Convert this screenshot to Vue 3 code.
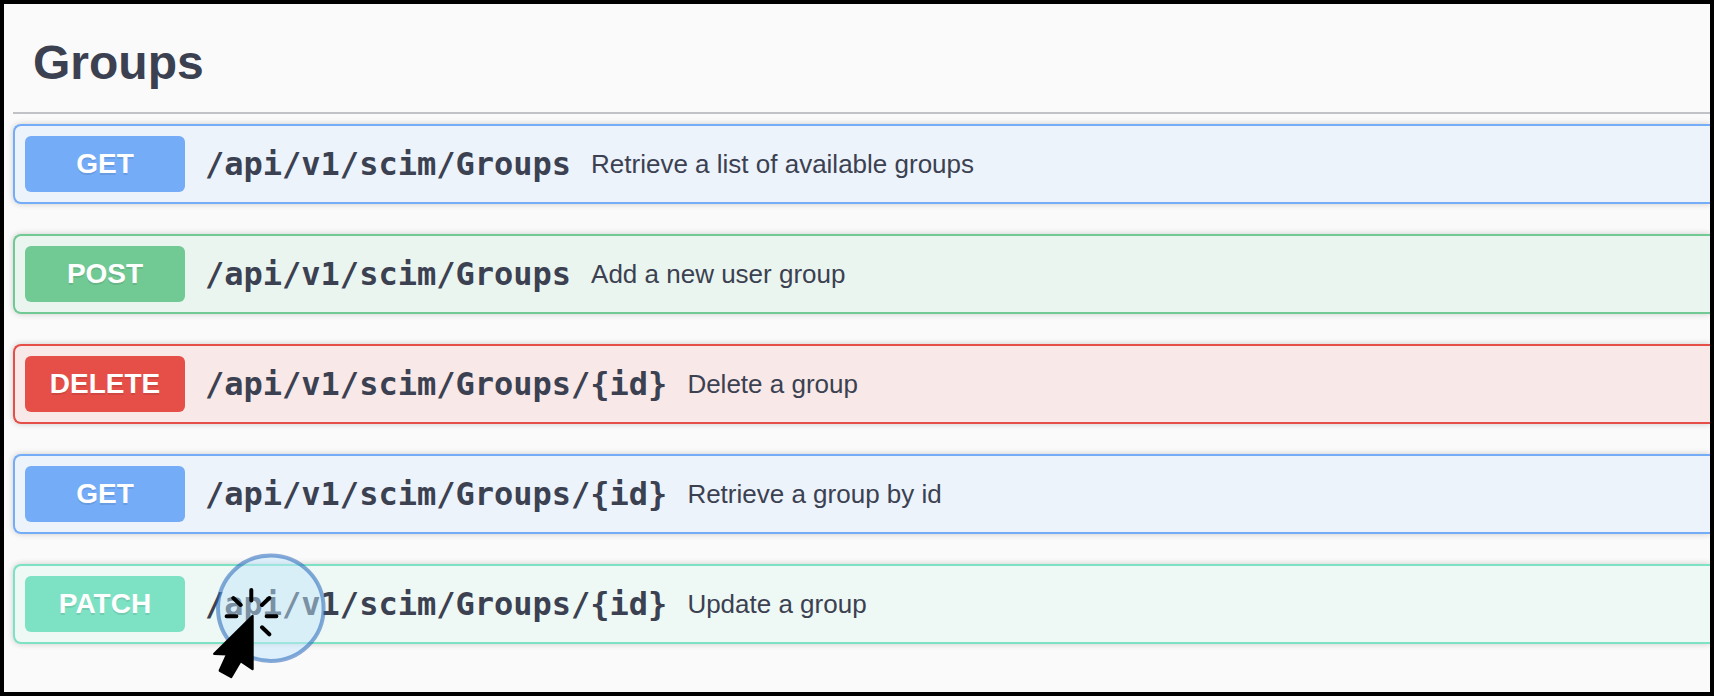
<script setup>
const operations = [
  { method: 'GET', path: '/api/v1/scim/Groups', summary: 'Retrieve a list of available groups' },
  { method: 'POST', path: '/api/v1/scim/Groups', summary: 'Add a new user group' },
  { method: 'DELETE', path: '/api/v1/scim/Groups/{id}', summary: 'Delete a group' },
  { method: 'GET', path: '/api/v1/scim/Groups/{id}', summary: 'Retrieve a group by id' },
  { method: 'PATCH', path: '/api/v1/scim/Groups/{id}', summary: 'Update a group', clicked: true },
]
</script>

<template>
  <main class="frame">
    <h2 class="title">Groups</h2>
    <ul class="operations">
      <li v-for="(op, i) in operations" :key="i" class="operation">
        <button type="button" class="summary" :class="op.method.toLowerCase()">
          <span class="method">{{ op.method }}</span>
          <span class="path">{{ op.path }}</span>
          <span class="description">{{ op.summary }}</span>
        </button>
        <svg v-if="op.clicked" class="click-marker" viewBox="0 0 130 136" aria-hidden="true">
          <circle cx="65.8" cy="58.2" r="53" fill="#c1e5fc" fill-opacity="0.48" />
          <circle cx="65.8" cy="58.2" r="52.8" fill="none" stroke="#1e61b8" stroke-opacity="0.53" stroke-width="4" />
          <g stroke="#000" stroke-width="4" stroke-linecap="round">
            <path d="M46.3 40V50.5M28.3 48L35.7 55M64.3 48L57 55M21.6 66.3H31.4M61.6 66.3H71.4M57 77.3L64.3 84.3" />
          </g>
          <path
            d="M47.5 66L9.3 103.8L22.2 104.3L14.8 120.6L26.2 126.9L35.6 111L47.5 119Z"
            fill="#000" stroke="#000" stroke-width="2.4" stroke-linejoin="round"
          />
        </svg>
      </li>
    </ul>
  </main>
</template>

<style>
body {
  margin: 0;
}
</style>

<style scoped>
.frame {
  box-sizing: border-box;
  min-height: 100vh;
  padding: 0 0 48px 9px;
  border: 4px solid #000;
  background: #fafafa;
  color: #3b4151;
  font-family: "Liberation Sans", Arial, sans-serif;
  overflow: hidden;
}

.title {
  margin: 0 0 10px;
  padding: 31px 20px 21px;
  border-bottom: 2px solid #c1c2c7;
  font-size: 48px;
  line-height: 56px;
  font-weight: 700;
}

.operations {
  display: flex;
  flex-direction: column;
  gap: 30px;
  margin: 0;
  padding: 0;
  list-style: none;
}

.operation {
  position: relative;
}

.summary {
  display: flex;
  align-items: center;
  gap: 20px;
  box-sizing: border-box;
  width: 100%;
  padding: 10px;
  border: 2px solid var(--accent);
  border-right: 0;
  border-radius: 8px 0 0 8px;
  background: var(--tint);
  box-shadow: 0 0 6px rgba(0, 0, 0, 0.19);
  color: inherit;
  font-family: inherit;
  text-align: left;
  cursor: pointer;
}

.get {
  --accent: #74acf8;
  --tint: #ecf3fb;
}

.post {
  --accent: #71c994;
  --tint: #ebf5f0;
}

.delete {
  --accent: #e64f48;
  --tint: #f8e8e7;
}

.patch {
  --accent: #7de2c4;
  --tint: #eef8f4;
}

.method {
  flex: none;
  width: 160px;
  border-radius: 6px;
  background: var(--accent);
  color: #fff;
  font-size: 28px;
  line-height: 56px;
  font-weight: 700;
  text-align: center;
  text-shadow: 0 2px 0 rgba(0, 0, 0, 0.1);
}

.path {
  font-family: "DejaVu Sans Mono", monospace;
  font-size: 32px;
  font-weight: 700;
  white-space: nowrap;
}

.description {
  font-size: 26px;
}

.click-marker {
  position: absolute;
  top: -14px;
  left: 192px;
  width: 130px;
  height: 136px;
  pointer-events: none;
}
</style>
